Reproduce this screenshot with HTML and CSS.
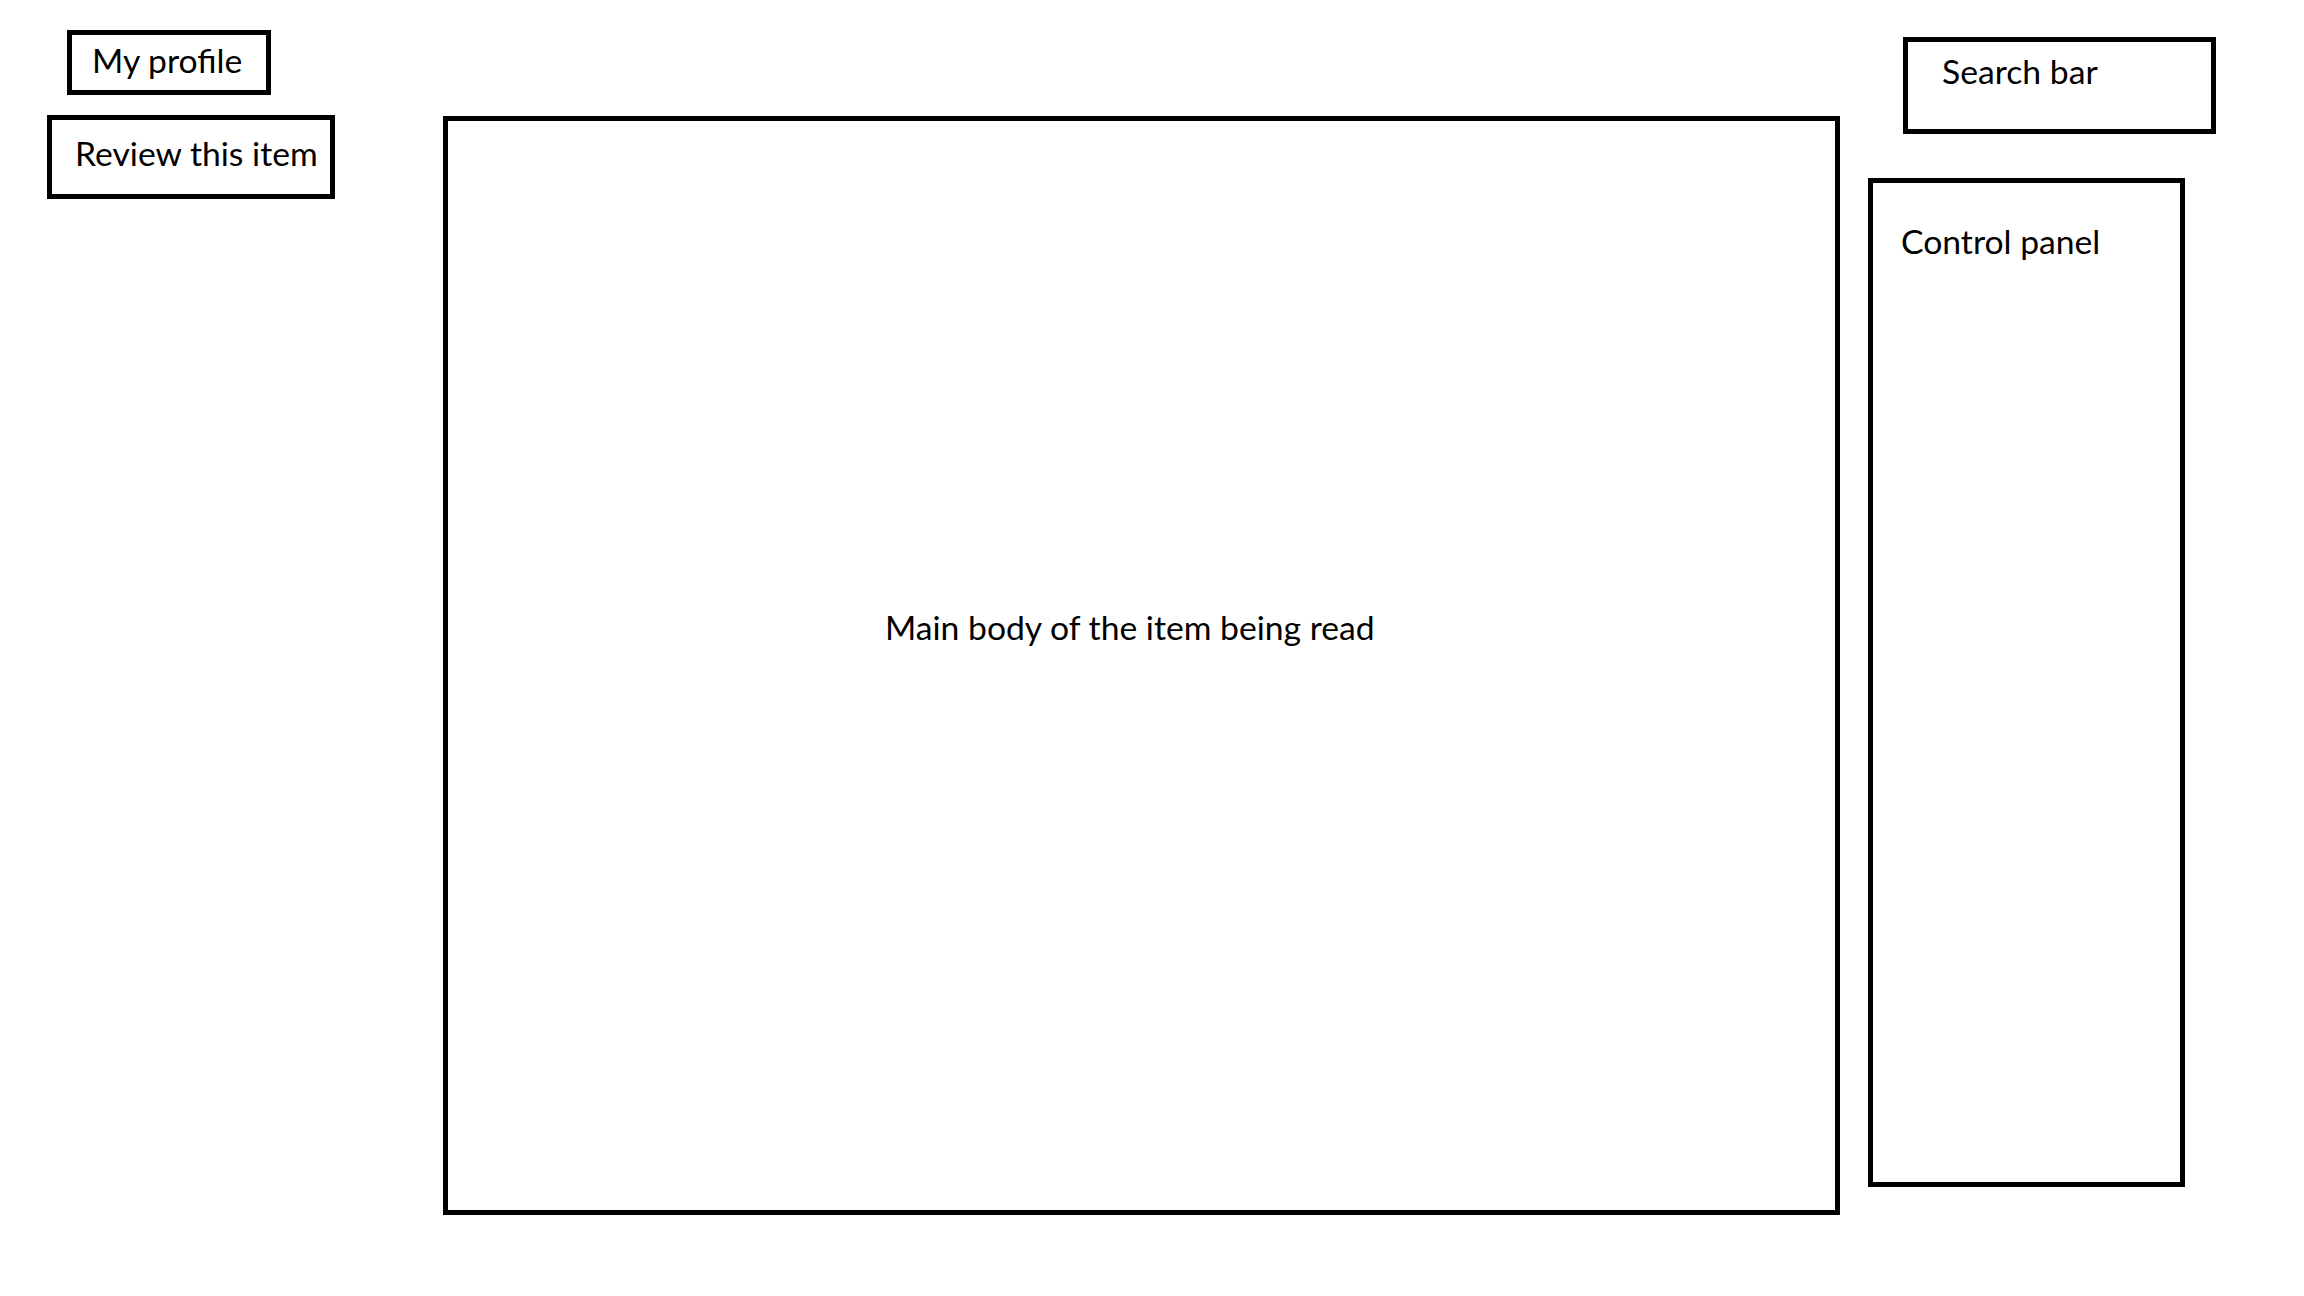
FILE: index.html
```html
<!DOCTYPE html>
<html>
<head>
<meta charset="utf-8">
<link rel="stylesheet" href="styles.css">
</head>
<body>
<div class="page">
  <div class="left-col">
    <div class="box profile"><span class="label">My profile</span></div>
    <div class="box review"><span class="label">Review this item</span></div>
  </div>
  <div class="box main"><span class="label">Main body of the item being read</span></div>
  <div class="right-col">
    <div class="box search"><span class="label">Search bar</span></div>
    <div class="box control"><span class="label">Control panel</span></div>
  </div>
</div>
</body>
</html>
```
FILE: styles.css
```css
html, body {
  margin: 0;
  padding: 0;
  background: #ffffff;
}
body {
  font-family: Lato, "Open Sans", sans-serif;
  font-size: 33.7px;
  line-height: 1;
  color: #000000;
}
.page {
  display: flex;
  align-items: flex-start;
  width: 2304px;
  height: 1296px;
}
.box {
  box-sizing: border-box;
  border: 5px solid #000000;
  white-space: nowrap;
}
.left-col {
  width: 443px;
  display: flex;
  flex-direction: column;
  align-items: flex-start;
}
.profile {
  margin: 30px 0 0 67px;
  width: 204px;
  height: 65px;
  padding: 9px 0 0 20px;
}
.review {
  margin: 20px 0 0 47px;
  width: 288px;
  height: 84px;
  padding: 17px 0 0 23px;
}
.main {
  margin-top: 116px;
  width: 1397px;
  height: 1099px;
  padding: 490px 0 0 437px;
}
.right-col {
  display: flex;
  flex-direction: column;
  align-items: flex-start;
}
.search {
  margin: 37px 0 0 63px;
  width: 313px;
  height: 97px;
  padding: 13px 0 0 34px;
}
.control {
  margin: 44px 0 0 28px;
  width: 317px;
  height: 1009px;
  padding: 42px 0 0 28px;
}
```
